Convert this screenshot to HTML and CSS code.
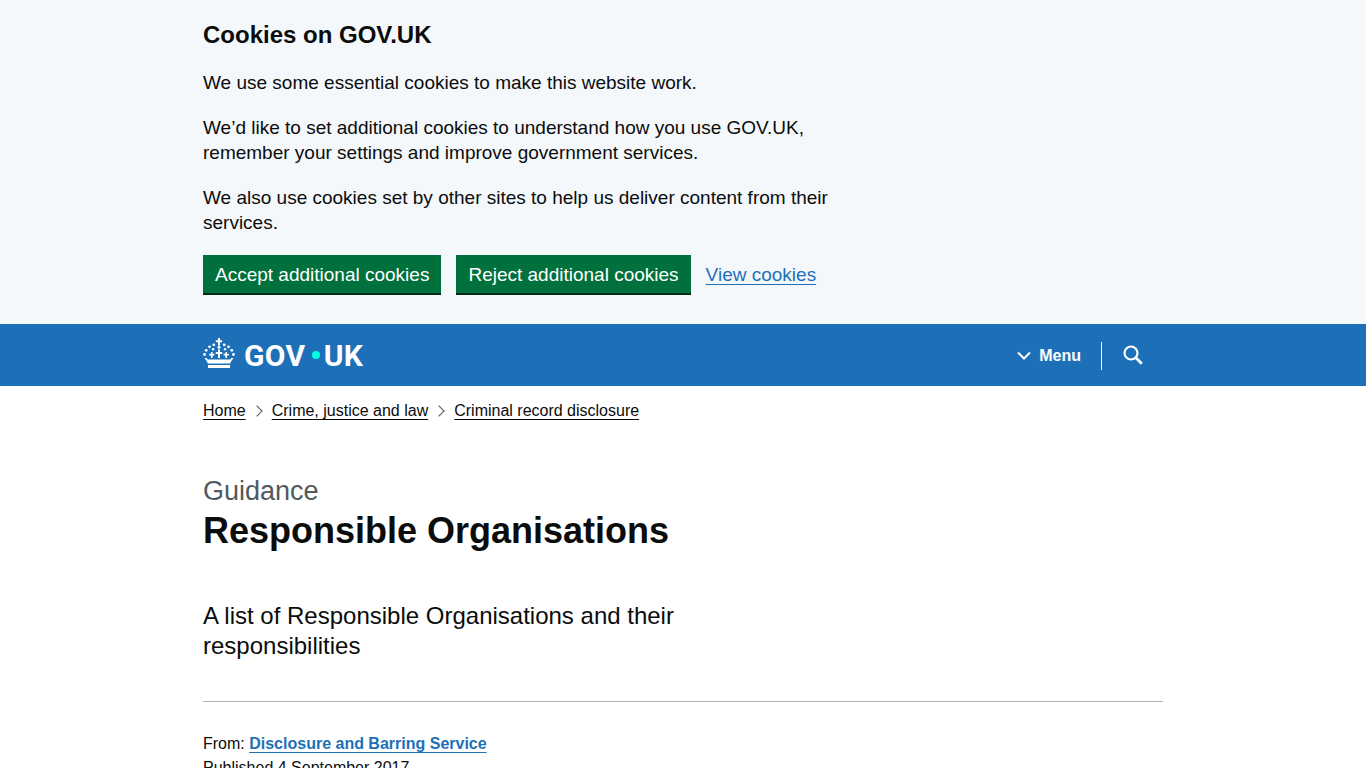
FILE: index.html
```html
<!DOCTYPE html>
<html lang="en">
<head>
  <meta charset="UTF-8">
  <meta name="viewport" content="width=device-width, initial-scale=1.0">
  <title>Responsible Organisations - GOV.UK</title>
  <link rel="stylesheet" href="styles.css">
</head>
<body>
  <div class="cookie-banner">
    <div class="container">
      <h2 class="cookie-title">Cookies on GOV.UK</h2>
      <div class="cookie-text">
        <p>We use some essential cookies to make this website work.</p>
        <p>We’d like to set additional cookies to understand how you use GOV.UK, remember your settings and improve government services.</p>
        <p>We also use cookies set by other sites to help us deliver content from their services.</p>
      </div>
      <div class="cookie-actions">
        <button type="button" class="btn">Accept additional cookies</button>
        <button type="button" class="btn">Reject additional cookies</button>
        <a href="#" class="cookie-link">View cookies</a>
      </div>
    </div>
  </div>

  <header class="site-header">
    <div class="container header-inner">
      <a href="#" class="logo">
        <svg class="crown" viewBox="0 0 32 30" width="32" height="30" fill="#fff" aria-hidden="true">
          <path d="M15 0h2v2.200h2.200v2H17v3.400h-2V4.200h-2.200v-2H15z"/>
          <circle cx="16" cy="9.300" r="1.500"/>
          <circle cx="10.800" cy="6.800" r="1.400"/>
          <circle cx="21.200" cy="6.800" r="1.400"/>
          <circle cx="6.500" cy="8.800" r="1.400"/>
          <circle cx="25.500" cy="8.800" r="1.400"/>
          <circle cx="3.200" cy="12.300" r="1.400"/>
          <circle cx="28.800" cy="12.300" r="1.400"/>
          <circle cx="1.500" cy="16.500" r="1.400"/>
          <circle cx="30.500" cy="16.500" r="1.400"/>
          <circle cx="10" cy="11.200" r="1.200"/>
          <circle cx="22" cy="11.200" r="1.200"/>
          <path d="M15 11.500h2v2.500h2.200v1.900H17V20h-2v-4.100h-2.200V14H15z"/>
          <path d="M8 14h1.600v1.800h1.800v1.600H9.600V20H8v-2.600H6.200v-1.600H8z"/>
          <path d="M22.400 14H24v1.800h1.800v1.600H24V20h-1.600v-2.600h-1.800v-1.600h1.800z"/>
          <path d="M1.500 20h2.200l1 1.500h22.600l1-1.500h2.200l-2.300 3.300c-.600.900-.900 1.500-.900 2.300H4.700c0-.800-.300-1.400-.900-2.300z"/>
          <path d="M5 27h22v3H5z"/>
        </svg>
        <span class="logo-text">GOV<span class="logo-dot"></span>UK</span>
      </a>
      <nav class="header-nav">
        <a href="#" class="menu-link">
          <svg class="menu-chevron" viewBox="0 0 14 10" width="14" height="10" aria-hidden="true"><path d="M1 1.500l6 6 6-6" fill="none" stroke="#fff" stroke-width="2"/></svg>
          Menu
        </a>
        <span class="nav-divider"></span>
        <a href="#" class="search-link" aria-label="Search">
          <svg viewBox="0 0 20 20" width="20" height="20" aria-hidden="true"><circle cx="8" cy="8" r="6.500" fill="none" stroke="#fff" stroke-width="2.200"/><path d="M12.800 12.800l6 6" stroke="#fff" stroke-width="2.800"/></svg>
        </a>
      </nav>
    </div>
  </header>

  <main class="container">
    <ol class="breadcrumbs">
      <li><a href="#">Home</a></li>
      <li><a href="#">Crime, justice and law</a></li>
      <li><a href="#">Criminal record disclosure</a></li>
    </ol>

    <span class="caption">Guidance</span>
    <h1>Responsible Organisations</h1>
    <p class="lead">A list of Responsible Organisations and their responsibilities</p>

    <div class="metadata">
      <p>From: <a href="#">Disclosure and Barring Service</a></p>
      <p>Published 4 September 2017</p>
    </div>
  </main>
</body>
</html>
```

FILE: styles.css
```css
html {
  overflow: hidden;
}

body {
  font-family: "Liberation Sans", Arial, sans-serif;
  color: #0b0c0c;
  background-color: #fff;
  margin: 0;
}

p {
  margin: 0;
}

a {
  text-underline-offset: 0.16em;
  text-decoration-skip-ink: none;
}

.container {
  width: 960px;
  margin: 0 auto;
}

.cookie-banner {
  background-color: #f4f8fb;
  padding: 20px 0 31px;
}

.cookie-title {
  font-size: 24px;
  line-height: 30px;
  font-weight: 700;
  margin: 0 0 20px;
}

.cookie-text {
  width: 630px;
  font-size: 19px;
  line-height: 25px;
}

.cookie-text p {
  margin-bottom: 20px;
}

.cookie-actions {
  display: flex;
  align-items: center;
  gap: 15px;
}

.btn {
  font-family: inherit;
  font-size: 19px;
  line-height: 25px;
  color: #fff;
  background-color: #00703c;
  border: none;
  border-radius: 0;
  box-shadow: 0 2px 0 #002d18;
  padding: 7px 12px 6px;
  cursor: pointer;
}

.cookie-link {
  margin-top: 2px;
  font-size: 19px;
  color: #1d70b8;
}

.site-header {
  background-color: #1d70b8;
  height: 62px;
}

.header-inner {
  display: flex;
  justify-content: space-between;
  align-items: center;
  height: 62px;
}

.logo {
  display: flex;
  align-items: center;
  gap: 9px;
  color: #fff;
  text-decoration: none;
}

.crown {
  margin-bottom: 4px;
}

.logo-text {
  font-family: Roboto, "Liberation Sans", sans-serif;
  font-size: 30px;
  font-weight: 700;
  letter-spacing: 0.4px;
  display: flex;
  align-items: center;
}

.logo-dot {
  width: 8px;
  height: 8px;
  margin: 0 4px 0 6px;
  border-radius: 50%;
  background-color: #00ffe0;
}

.header-nav {
  display: flex;
  align-items: center;
  margin-top: 2px;
  margin-right: 20px;
}

.menu-link {
  display: flex;
  align-items: center;
  gap: 8px;
  font-size: 16px;
  font-weight: 700;
  color: #fff;
  text-decoration: none;
}

.nav-divider {
  width: 1px;
  height: 28px;
  margin: 0 21px 0 20px;
  background-color: #fff;
}

.search-link {
  display: flex;
  margin-bottom: 2px;
}

.breadcrumbs {
  display: flex;
  list-style: none;
  margin: 0;
  padding: 15px 0 0;
  font-size: 16px;
  line-height: 20px;
}

.breadcrumbs li + li {
  margin-left: 26px;
  position: relative;
}

.breadcrumbs li + li::before {
  content: "";
  position: absolute;
  left: -19px;
  top: 6px;
  width: 7px;
  height: 7px;
  border-top: 1px solid #505a5f;
  border-right: 1px solid #505a5f;
  transform: rotate(45deg);
}

.breadcrumbs a {
  color: #0b0c0c;
}

.caption {
  display: block;
  margin: 55px 0 5px;
  font-size: 27px;
  line-height: 30px;
  color: #505a5f;
}

h1 {
  font-size: 36px;
  line-height: 40px;
  font-weight: 700;
  margin: 0;
}

.lead {
  width: 630px;
  margin-top: 50px;
  font-size: 24px;
  line-height: 30px;
}

.metadata {
  margin-top: 40px;
  padding-top: 30px;
  border-top: 1px solid #b1b4b6;
  font-size: 16px;
  line-height: 24px;
}

.metadata a {
  color: #1d70b8;
  font-weight: 700;
}
```
